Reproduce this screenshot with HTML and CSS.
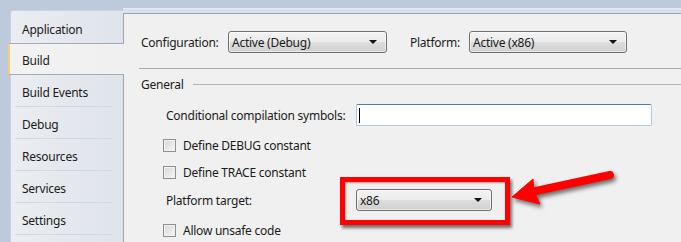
FILE: index.html
```html
<!DOCTYPE html>
<html>
<head>
<meta charset="utf-8">
<link rel="stylesheet" href="styles.css">
</head>
<body>
<div class="window">
  <nav class="tabs">
    <div class="tab">Application</div>
    <div class="tab tab-active">Build</div>
    <div class="tab">Build Events</div>
    <div class="tab">Debug</div>
    <div class="tab">Resources</div>
    <div class="tab">Services</div>
    <div class="tab">Settings</div>
    <div class="tab"></div>
  </nav>
  <div class="main">
    <section class="panel">
      <div class="config-row">
        <span class="lbl lbl-config">Configuration:</span>
        <div class="combo combo-config"><span>Active (Debug)</span><i class="caret"></i></div>
        <span class="lbl lbl-platform">Platform:</span>
        <div class="combo combo-platform"><span>Active (x86)</span><i class="caret"></i></div>
      </div>
      <div class="rule"></div>
      <div class="group-head"><span>General</span><div class="group-line"></div></div>
      <div class="group-body">
        <div class="field-row">
          <span class="lbl lbl-field">Conditional compilation symbols:</span>
          <div class="textbox"><i class="cursor"></i></div>
        </div>
        <div class="check-row"><span class="checkbox"></span><span>Define DEBUG constant</span></div>
        <div class="check-row check-trace"><span class="checkbox"></span><span>Define TRACE constant</span></div>
        <div class="field-row field-target">
          <span class="lbl lbl-field">Platform target:</span>
          <div class="highlight-wrap">
            <div class="combo combo-target"><span>x86</span><i class="caret"></i></div>
            <div class="red-frame"></div>
          </div>
        </div>
        <div class="check-row check-unsafe"><span class="checkbox"></span><span>Allow unsafe code</span></div>
      </div>
    </section>
  </div>
  <svg class="arrow" width="125" height="60" viewBox="0 0 125 60">
    <g fill="#f00" stroke="#f00">
      <line x1="110" y1="15" x2="36" y2="31" stroke-width="8" stroke-linecap="round"/>
      <polygon points="12,37 33,19 34,31 40,44" stroke-width="1" stroke-linejoin="round"/>
    </g>
  </svg>
</div>
</body>
</html>
```
FILE: styles.css
```css
html, body {
  margin: 0;
  padding: 0;
}
body {
  width: 681px;
  height: 242px;
  overflow: hidden;
  background: #bccadb;
  font-family: "Noto Sans", "Open Sans", sans-serif;
  font-size: 12px;
  letter-spacing: -0.25px;
  color: #1b1b1b;
}
.window {
  position: relative;
  display: flex;
  height: 242px;
  padding-left: 10px;
  box-sizing: border-box;
  overflow: hidden;
}
.tabs {
  width: 113px;
  margin-top: 10px;
  padding-top: 3px;
  box-sizing: border-box;
  border-top: 1px solid #cdd4de;
  border-left: 1px solid #c9d0da;
  border-top-left-radius: 3px;
  background: linear-gradient(to right, #eaedf1, #dfe4eb);
  flex-shrink: 0;
}
.tab {
  height: 32px;
  box-sizing: border-box;
  padding-left: 11px;
  line-height: 35px;
  background: linear-gradient(#d4d9e0, #d4d9e0) 4px 100% / 96px 1px no-repeat;
}
.tab:first-child {
  height: 31px;
  margin-top: -2px;
  line-height: 35px;
  background: none;
}
.tab-active {
  position: relative;
  z-index: 2;
  margin-left: -3px;
  margin-right: -1px;
  padding-left: 12px;
  border-left: 2px solid #f7cf6e;
  border-top: 1px solid #a3abb7;
  border-bottom: 1px solid #a3abb7;
  background: linear-gradient(to right, #f2f2f2, #f0f0f0);
  line-height: 33px;
}
.main {
  flex: 1;
  padding-top: 13px;
  background: linear-gradient(to bottom, #bccadb 0 8px, #e6ebf1 8px 9px, #d8e0ea 9px 13px);
}
.panel {
  height: 100%;
  box-sizing: border-box;
  border-top: 1px solid #9aa3ae;
  border-left: 1px solid #9aa3ae;
  background: #f0f0f0;
  padding: 17px 0 0 17px;
}
.config-row {
  display: flex;
  align-items: center;
  height: 22px;
}
.lbl {
  white-space: nowrap;
  flex-shrink: 0;
}
.lbl-config { width: 87px; }
.lbl-platform { width: 59px; margin-left: 23px; }
.combo {
  position: relative;
  display: flex;
  align-items: center;
  height: 22px;
  box-sizing: border-box;
  border: 1px solid #707070;
  border-radius: 3px;
  padding-left: 3px;
  background: linear-gradient(#f3f3f3 0%, #ebebeb 48%, #dddddd 52%, #cfcfcf 100%);
  box-shadow: inset 0 0 0 1px rgba(255,255,255,0.6);
}
.combo-config { width: 159px; }
.combo-platform { width: 158px; }
.caret {
  margin-left: auto;
  margin-right: 9px;
  width: 0;
  height: 0;
  border-left: 4px solid transparent;
  border-right: 4px solid transparent;
  border-top: 4px solid #111;
}
.rule {
  height: 1px;
  margin: 15px 0 0 -2px;
  background: #a9a9a9;
}
.group-head {
  display: flex;
  align-items: center;
  height: 16px;
  margin-top: 7px;
}
.group-line {
  flex: 1;
  height: 1px;
  margin-left: 10px;
  background: #b4b4b4;
}
.group-body {
  padding-left: 25px;
}
.field-row {
  display: flex;
  align-items: center;
  height: 22px;
  margin-top: 12px;
}
.lbl-field { width: 190px; }
.textbox {
  display: flex;
  align-items: center;
  width: 296px;
  height: 22px;
  box-sizing: border-box;
  border: 1px solid #abc9e2;
  border-top-color: #4a7cab;
  border-radius: 2px;
  background: #fff;
  padding-left: 2px;
}
.cursor {
  width: 1px;
  height: 15px;
  background: #000;
}
.check-row {
  display: flex;
  align-items: center;
  height: 16px;
  margin-top: 11px;
  margin-left: -3px;
  gap: 7px;
}
.checkbox {
  width: 13px;
  height: 13px;
  box-sizing: border-box;
  border: 1px solid #8f8f8f;
  background: linear-gradient(135deg, #d6d6d6, #f7f7f7);
  box-shadow: inset 0 0 0 1px #f2f2f2;
}
.field-target { margin-top: 9px; }
.highlight-wrap {
  position: relative;
}
.combo-target { width: 136px; }
.red-frame {
  position: absolute;
  left: -16px;
  right: -18px;
  top: -12px;
  bottom: -14px;
  border: 5px solid #ff0000;
  box-shadow: 2px 3px 3px rgba(0,0,0,0.55), inset 1px 1px 2px rgba(0,0,0,0.35);
}
.arrow {
  position: absolute;
  left: 500px;
  top: 160px;
  filter: drop-shadow(2px 3px 2px rgba(0,0,0,0.55));
}
```
